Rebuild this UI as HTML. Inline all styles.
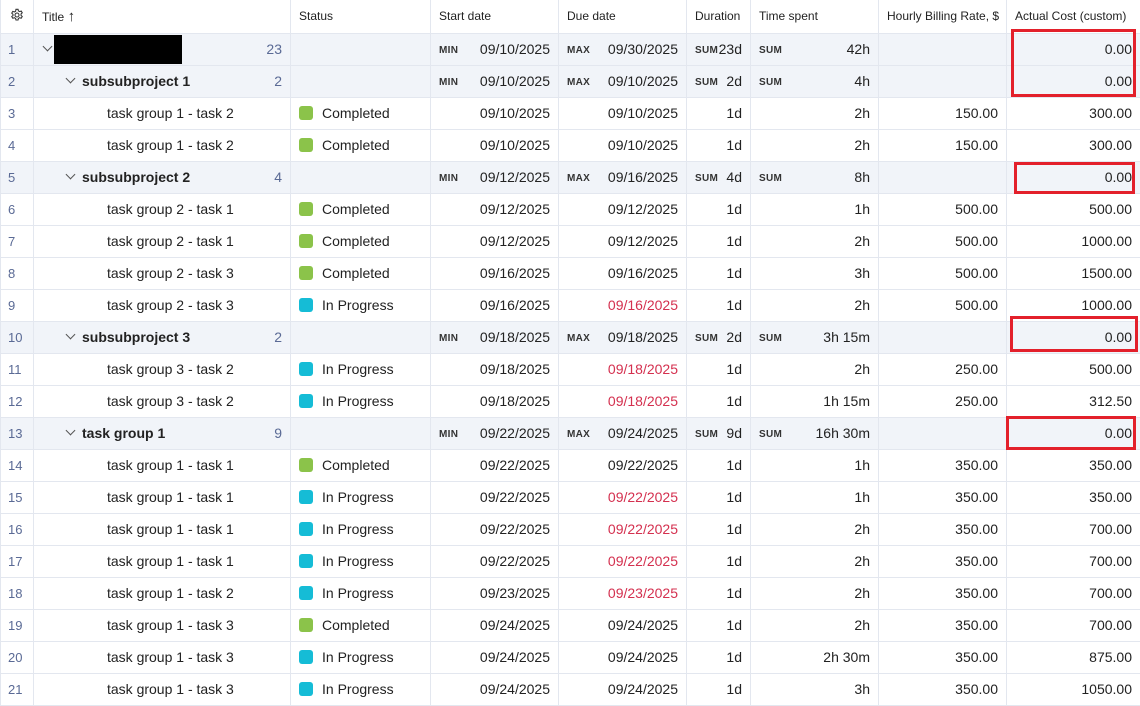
<!DOCTYPE html>
<html><head><meta charset="utf-8"><style>
*{box-sizing:border-box;margin:0;padding:0}
body{width:1140px;height:698px;overflow:hidden;background:#fff;font-family:"Segoe UI","Liberation Sans",sans-serif;color:#222;font-size:14px}
table{border-collapse:collapse;table-layout:fixed;width:1140px}
td,th{border:1px solid #e3e7ef;height:32px;white-space:nowrap;overflow:hidden;padding:0 8px;position:relative}
th{font-weight:normal;font-size:12px;text-align:left;height:33px;border-top:none}
tr.g td{background:#f1f4f9}
td.n{color:#5a6a95;font-size:13px;padding-left:7px}
td.r{text-align:right}
.lab{font-size:10px;font-weight:bold;color:#333;position:absolute;left:8px;top:11px;letter-spacing:.3px}
.red{color:#d4304f}
.sq{display:inline-block;width:14px;height:14px;border-radius:3px;vertical-align:-2px;margin-right:9px}
.c{background:#8bc34a}.p{background:#15bcd6}
.t{padding-left:73px}
.gt{font-weight:bold;padding-left:31px}
.cnt{position:absolute;right:8px;top:7px;color:#5a6a95;font-weight:normal}
.chev{position:absolute;top:9px;width:7px;height:7px;border-right:1.3px solid #555;border-bottom:1.3px solid #555;transform:rotate(45deg)}
.box{position:absolute;border:3px solid #e3202b}
</style></head><body>
<table>
<colgroup><col style="width:33px"><col style="width:257px"><col style="width:140px"><col style="width:128px"><col style="width:128px"><col style="width:64px"><col style="width:128px"><col style="width:128px"><col style="width:134px"></colgroup>
<tr><th style="text-align:center;padding:0"><svg width="14" height="14" viewBox="0 0 16 16" fill="none" stroke="#333" stroke-width="1.2"><circle cx="8" cy="8" r="2.3"/><path d="M6.8 1.5h2.4l.4 1.8 1.4.8 1.8-.6 1.2 2-1.4 1.3v1.6l1.4 1.3-1.2 2-1.8-.6-1.4.8-.4 1.8H6.8l-.4-1.8-1.4-.8-1.8.6-1.2-2L3.4 8.8V7.2L2 5.9l1.2-2 1.8.6 1.4-.8z"/></svg></th><th>Title <span style="font-size:15px">↑</span></th><th>Status</th><th>Start date</th><th>Due date</th><th>Duration</th><th>Time spent</th><th>Hourly Billing Rate, $</th><th>Actual Cost (custom)</th></tr>
<tr class="g"><td class="n">1</td><td><span class="chev" style="left:10px"></span><span style="position:absolute;left:20px;top:1px;width:128px;height:29px;background:#000"></span><span class="cnt">23</span></td><td></td><td class="r"><span class="lab">MIN</span>09/10/2025</td><td class="r"><span class="lab">MAX</span>09/30/2025</td><td class="r"><span class="lab">SUM</span>23d</td><td class="r"><span class="lab">SUM</span>42h</td><td></td><td class="r">0.00</td></tr>
<tr class="g"><td class="n">2</td><td class="gt"><span class="chev" style="left:33px"></span><span style="padding-left:17px">subsubproject 1</span><span class="cnt">2</span></td><td></td><td class="r"><span class="lab">MIN</span>09/10/2025</td><td class="r"><span class="lab">MAX</span>09/10/2025</td><td class="r"><span class="lab">SUM</span>2d</td><td class="r"><span class="lab">SUM</span>4h</td><td></td><td class="r">0.00</td></tr>
<tr><td class="n">3</td><td class="t">task group 1 - task 2</td><td><span class="sq c"></span>Completed</td><td class="r">09/10/2025</td><td class="r">09/10/2025</td><td class="r">1d</td><td class="r">2h</td><td class="r">150.00</td><td class="r">300.00</td></tr>
<tr><td class="n">4</td><td class="t">task group 1 - task 2</td><td><span class="sq c"></span>Completed</td><td class="r">09/10/2025</td><td class="r">09/10/2025</td><td class="r">1d</td><td class="r">2h</td><td class="r">150.00</td><td class="r">300.00</td></tr>
<tr class="g"><td class="n">5</td><td class="gt"><span class="chev" style="left:33px"></span><span style="padding-left:17px">subsubproject 2</span><span class="cnt">4</span></td><td></td><td class="r"><span class="lab">MIN</span>09/12/2025</td><td class="r"><span class="lab">MAX</span>09/16/2025</td><td class="r"><span class="lab">SUM</span>4d</td><td class="r"><span class="lab">SUM</span>8h</td><td></td><td class="r">0.00</td></tr>
<tr><td class="n">6</td><td class="t">task group 2 - task 1</td><td><span class="sq c"></span>Completed</td><td class="r">09/12/2025</td><td class="r">09/12/2025</td><td class="r">1d</td><td class="r">1h</td><td class="r">500.00</td><td class="r">500.00</td></tr>
<tr><td class="n">7</td><td class="t">task group 2 - task 1</td><td><span class="sq c"></span>Completed</td><td class="r">09/12/2025</td><td class="r">09/12/2025</td><td class="r">1d</td><td class="r">2h</td><td class="r">500.00</td><td class="r">1000.00</td></tr>
<tr><td class="n">8</td><td class="t">task group 2 - task 3</td><td><span class="sq c"></span>Completed</td><td class="r">09/16/2025</td><td class="r">09/16/2025</td><td class="r">1d</td><td class="r">3h</td><td class="r">500.00</td><td class="r">1500.00</td></tr>
<tr><td class="n">9</td><td class="t">task group 2 - task 3</td><td><span class="sq p"></span>In Progress</td><td class="r">09/16/2025</td><td class="r red">09/16/2025</td><td class="r">1d</td><td class="r">2h</td><td class="r">500.00</td><td class="r">1000.00</td></tr>
<tr class="g"><td class="n">10</td><td class="gt"><span class="chev" style="left:33px"></span><span style="padding-left:17px">subsubproject 3</span><span class="cnt">2</span></td><td></td><td class="r"><span class="lab">MIN</span>09/18/2025</td><td class="r"><span class="lab">MAX</span>09/18/2025</td><td class="r"><span class="lab">SUM</span>2d</td><td class="r"><span class="lab">SUM</span>3h 15m</td><td></td><td class="r">0.00</td></tr>
<tr><td class="n">11</td><td class="t">task group 3 - task 2</td><td><span class="sq p"></span>In Progress</td><td class="r">09/18/2025</td><td class="r red">09/18/2025</td><td class="r">1d</td><td class="r">2h</td><td class="r">250.00</td><td class="r">500.00</td></tr>
<tr><td class="n">12</td><td class="t">task group 3 - task 2</td><td><span class="sq p"></span>In Progress</td><td class="r">09/18/2025</td><td class="r red">09/18/2025</td><td class="r">1d</td><td class="r">1h 15m</td><td class="r">250.00</td><td class="r">312.50</td></tr>
<tr class="g"><td class="n">13</td><td class="gt"><span class="chev" style="left:33px"></span><span style="padding-left:17px">task group 1</span><span class="cnt">9</span></td><td></td><td class="r"><span class="lab">MIN</span>09/22/2025</td><td class="r"><span class="lab">MAX</span>09/24/2025</td><td class="r"><span class="lab">SUM</span>9d</td><td class="r"><span class="lab">SUM</span>16h 30m</td><td></td><td class="r">0.00</td></tr>
<tr><td class="n">14</td><td class="t">task group 1 - task 1</td><td><span class="sq c"></span>Completed</td><td class="r">09/22/2025</td><td class="r">09/22/2025</td><td class="r">1d</td><td class="r">1h</td><td class="r">350.00</td><td class="r">350.00</td></tr>
<tr><td class="n">15</td><td class="t">task group 1 - task 1</td><td><span class="sq p"></span>In Progress</td><td class="r">09/22/2025</td><td class="r red">09/22/2025</td><td class="r">1d</td><td class="r">1h</td><td class="r">350.00</td><td class="r">350.00</td></tr>
<tr><td class="n">16</td><td class="t">task group 1 - task 1</td><td><span class="sq p"></span>In Progress</td><td class="r">09/22/2025</td><td class="r red">09/22/2025</td><td class="r">1d</td><td class="r">2h</td><td class="r">350.00</td><td class="r">700.00</td></tr>
<tr><td class="n">17</td><td class="t">task group 1 - task 1</td><td><span class="sq p"></span>In Progress</td><td class="r">09/22/2025</td><td class="r red">09/22/2025</td><td class="r">1d</td><td class="r">2h</td><td class="r">350.00</td><td class="r">700.00</td></tr>
<tr><td class="n">18</td><td class="t">task group 1 - task 2</td><td><span class="sq p"></span>In Progress</td><td class="r">09/23/2025</td><td class="r red">09/23/2025</td><td class="r">1d</td><td class="r">2h</td><td class="r">350.00</td><td class="r">700.00</td></tr>
<tr><td class="n">19</td><td class="t">task group 1 - task 3</td><td><span class="sq c"></span>Completed</td><td class="r">09/24/2025</td><td class="r">09/24/2025</td><td class="r">1d</td><td class="r">2h</td><td class="r">350.00</td><td class="r">700.00</td></tr>
<tr><td class="n">20</td><td class="t">task group 1 - task 3</td><td><span class="sq p"></span>In Progress</td><td class="r">09/24/2025</td><td class="r">09/24/2025</td><td class="r">1d</td><td class="r">2h 30m</td><td class="r">350.00</td><td class="r">875.00</td></tr>
<tr><td class="n">21</td><td class="t">task group 1 - task 3</td><td><span class="sq p"></span>In Progress</td><td class="r">09/24/2025</td><td class="r">09/24/2025</td><td class="r">1d</td><td class="r">3h</td><td class="r">350.00</td><td class="r">1050.00</td></tr>
</table>
<div class="box" style="left:1011px;top:29px;width:125px;height:68px"></div>
<div class="box" style="left:1014px;top:162px;width:121px;height:32px"></div>
<div class="box" style="left:1010px;top:316px;width:128px;height:36px"></div>
<div class="box" style="left:1006px;top:416px;width:130px;height:34px"></div>
</body></html>
